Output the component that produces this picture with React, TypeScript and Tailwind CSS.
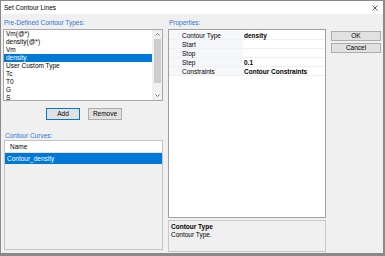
import React from "react";

const types = ["Vm(@*)", "density(@*)", "Vm", "density", "User Custom Type", "Tc", "T0", "G", "S"];

const props = [
  { name: "Contour Type", value: "density" },
  { name: "Start", value: "" },
  { name: "Stop", value: "" },
  { name: "Step", value: "0.1" },
  { name: "Constraints", value: "Contour Constraints" },
];

const Label = ({ children }: { children: React.ReactNode }) => (
  <div className="h-[8px] leading-[8px] text-[#2f76d2] pl-[1px] pt-[1px]">{children}</div>
);

export default function App() {
  return (
    <div
      className="w-[385px] h-[256px] flex flex-col bg-[#f0f0f0] border-l border-t border-[#8a8a8a] border-r-2 border-b-[3px] text-[6.5px] text-black overflow-hidden"
      style={{ fontFamily: '"Liberation Sans", Arial, sans-serif' }}
    >
      {/* title bar */}
      <div className="h-[13px] bg-white flex items-center justify-between pl-[3px] pr-[4px] shrink-0">
        <span className="leading-[8px] text-[6.5px]">Set Contour Lines</span>
        <svg width="6" height="6" viewBox="0 0 6 6" className="mr-[1px]">
          <path d="M0.5 0.5 L5.5 5.5 M5.5 0.5 L0.5 5.5" stroke="#333" strokeWidth="0.8" />
        </svg>
      </div>

      <div className="flex flex-1 pl-[2px] pt-[4px] gap-[5px]">
        {/* left column */}
        <div className="w-[160px] flex flex-col">
          <Label>Pre-Defined Contour Types:</Label>
          <div className="mt-[3px] h-[72px] border border-[#a8a8a8] bg-white flex overflow-hidden">
            <div className="flex-1">
              {types.map((t, i) => (
                <div
                  key={t}
                  className={
                    "h-[8px] leading-[8px] pl-[2px] " +
                    (i === 3 ? "bg-[#0078d7] text-white" : "")
                  }
                >
                  {t}
                </div>
              ))}
            </div>
            <div className="w-[10px] bg-[#f0f0f0] flex flex-col items-center">
              <div className="h-[9px] flex items-center justify-center">
                <svg width="5" height="3" viewBox="0 0 5 3">
                  <path d="M0.5 2.5 L2.5 0.5 L4.5 2.5" stroke="#606060" strokeWidth="0.8" fill="none" />
                </svg>
              </div>
              <div className="w-[7px] h-[44px] bg-[#cdcdcd]" />
              <div className="flex-1" />
              <div className="h-[9px] flex items-center justify-center">
                <svg width="5" height="3" viewBox="0 0 5 3">
                  <path d="M0.5 0.5 L2.5 2.5 L4.5 0.5" stroke="#606060" strokeWidth="0.8" fill="none" />
                </svg>
              </div>
            </div>
          </div>

          <div className="mt-[7px] flex justify-center gap-[8px] pl-[2px]">
            <button className="w-[34px] h-[12px] bg-[#e1e1e1] border border-[#0078d7] leading-[10px]">
              Add
            </button>
            <button className="w-[34px] h-[12px] bg-[#e1e1e1] border border-[#adadad] leading-[10px]">
              Remove
            </button>
          </div>

          <div className="mt-[11px] pl-[1px]">
            <Label>Contour Curves:</Label>
          </div>
          <div className="mt-[1px] ml-[1px] h-[110px] border border-[#c4c4c4] flex flex-col">
            <div className="h-[12px] leading-[12px] bg-white pl-[5px] border-b border-[#e5e5e5]">Name</div>
            <div className="h-[11px] leading-[11px] bg-[#0078d7] text-white pl-[2px]">Contour_density</div>
          </div>
        </div>

        {/* middle column */}
        <div className="w-[158px] flex flex-col">
          <Label>Properties:</Label>
          <div className="mt-[3px] h-[189px] border border-[#a0a0a0] bg-white pt-[1px]">
            {props.map((p) => (
              <div key={p.name} className="h-[9px] flex border-b border-[#f0f0f0]">
                <div className="w-[74px] bg-[#f5f7fa] pl-[13px] leading-[9px]">{p.name}</div>
                <div className="flex-1 pl-[1px] font-bold leading-[9px]">{p.value}</div>
              </div>
            ))}
          </div>
          <div className="mt-[2px] h-[32px] border border-[#c8c8c8] bg-[#f0f0f0] pl-[2px] pt-[2px]">
            <div className="font-bold leading-[8px]">Contour Type</div>
            <div className="leading-[8px]">Contour Type.</div>
          </div>
        </div>

        {/* right column */}
        <div className="w-[50px] flex flex-col gap-[2px] pt-[13px]">
          <button className="h-[10px] bg-[#e1e1e1] border border-[#adadad] leading-[8px]">OK</button>
          <button className="h-[10px] bg-[#e1e1e1] border border-[#adadad] leading-[8px]">Cancel</button>
        </div>
      </div>
    </div>
  );
}
